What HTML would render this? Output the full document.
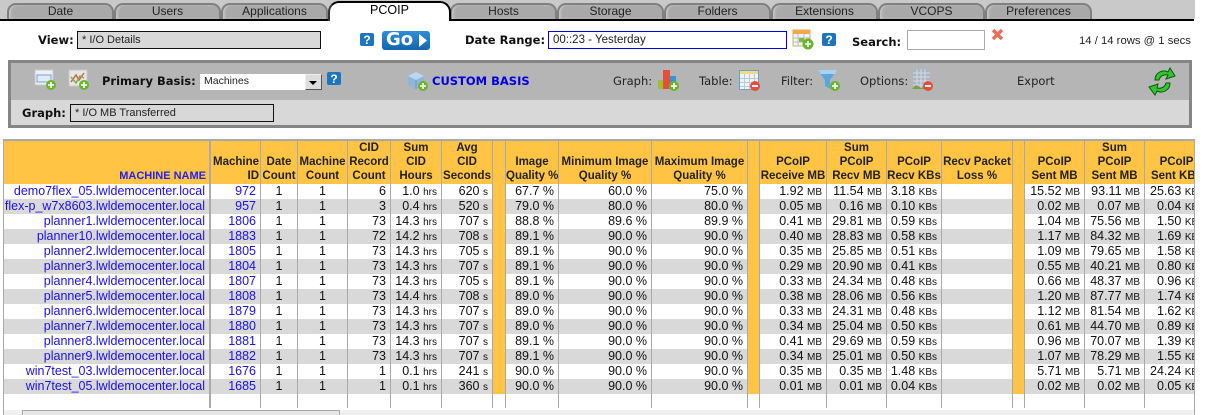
<!DOCTYPE html>
<html><head><meta charset="utf-8"><style>
html,body{margin:0;padding:0;width:1205px;height:415px;overflow:hidden;background:#fff;font-family:"Liberation Sans",Arial,sans-serif;color:#111}
.a{position:absolute}
.tab{position:absolute;top:3px;height:16px;width:107px;background:#a9a9a9;border:2px solid #808080;border-bottom:none;border-radius:9px 9px 0 0;box-sizing:border-box;text-align:center;font-size:12px;line-height:13px;color:#222;box-shadow:inset 2px 0 2px #c4c4c4}
.v{font:bold 11.5px "DejaVu Sans",sans-serif;color:#111;white-space:nowrap}
.l{font:11.5px "DejaVu Sans",sans-serif;color:#222;white-space:nowrap}
.box{position:absolute;box-sizing:border-box;background:#d8d8d8;border:1px solid #111;font-size:11px;line-height:16px;padding-left:4px;color:#222}
table{border-collapse:separate;border-spacing:0;table-layout:fixed;position:absolute;left:3px;top:139px;width:1192px;background:#fff}
th{background:#ffc444;font-size:11.5px;line-height:14px;font-weight:bold;color:#222;vertical-align:bottom;text-align:center;border-right:1px solid #aaa;border-top:2px solid #aaa;padding:0 0 1px;overflow:hidden;white-space:nowrap;height:42px}
td{height:15px;padding:0 4px 0 0;font-size:12.5px;line-height:15px;text-align:right;border-right:1px solid #aaa;white-space:nowrap;overflow:hidden;color:#111}
tr.g td{background:#d9d9d9}
td.n{color:#1a0ff0}
td.c{text-align:center;padding:0}
tr td.s,tr.g td.s,th.s{background:#ffc444}
td u{text-decoration:none;font-size:10px;line-height:10px}
tr.e td{height:14px;background:#fff}
</style></head><body>
<div class="a" style="left:0;top:0;width:1195px;height:19px;background:#c9c9c9"></div>
<div class="tab" style="left:7px">Date</div>
<div class="tab" style="left:114px">Users</div>
<div class="tab" style="left:221px">Applications</div>
<div class="tab" style="left:450px">Hosts</div>
<div class="tab" style="left:557px">Storage</div>
<div class="tab" style="left:664px">Folders</div>
<div class="tab" style="left:771px">Extensions</div>
<div class="tab" style="left:878px">VCOPS</div>
<div class="tab" style="left:985px">Preferences</div>
<div class="a" style="left:0;top:19px;width:1194px;height:2px;background:#000"></div>
<div class="a" style="left:328px;top:1px;width:123px;height:20px;box-sizing:border-box;background:#fff;border:2px solid #000;border-bottom:none;border-left-color:#333;border-radius:11px 11px 0 0;text-align:center;font-size:12.5px;line-height:15px;color:#000">PCOIP</div>

<div class="a v" style="left:38px;top:33px">View:</div>
<div class="box" style="left:77px;top:31px;width:244px;height:18px">* I/O Details</div>
<svg class="a" style="left:360px;top:33px" width="15" height="14"><rect width="14" height="13" rx="2" fill="#1f75bd"/><text x="7" y="11" text-anchor="middle" font-family="Liberation Sans" font-weight="bold" font-size="12" fill="#fff">?</text></svg>
<div class="a" style="left:382px;top:31px;width:48px;height:19px;border-radius:3px;background:linear-gradient(#2f8fd6,#1465ad)"></div>
<div class="a" style="left:386px;top:30px;font:bold 18px 'DejaVu Sans',sans-serif;line-height:20px;color:#fff">Go</div>
<svg class="a" style="left:418px;top:33px" width="10" height="15"><path d="M1 1 L9 7.5 L1 14 Z" fill="#fff"/></svg>
<div class="a v" style="left:465px;top:33px">Date Range:</div>
<div class="a" style="left:548px;top:31px;width:239px;height:18px;box-sizing:border-box;border:1px solid #0000e0;background:#fff;font-size:11.5px;line-height:16px;padding-left:4px;color:#222">00::23 - Yesterday</div>
<svg class="a" style="left:792px;top:29px" width="22" height="21"><rect x="1" y="1" width="17" height="16" fill="#eef3f5" stroke="#c9b070"/><rect x="1" y="1" width="17" height="4" fill="#f3a94a"/><path d="M6 5V17M12 5V17M1 9H18M1 13H18" stroke="#b5c4b5" fill="none"/><rect x="7" y="9" width="5" height="4" fill="#8ab34a"/><circle cx="16" cy="15" r="5.5" fill="#6bb52c"/><path d="M13 15H19M16 12V18" stroke="#fff" stroke-width="1.6"/></svg>
<svg class="a" style="left:822px;top:33px" width="15" height="14"><rect width="14" height="13" rx="2" fill="#1f75bd"/><text x="7" y="11" text-anchor="middle" font-family="Liberation Sans" font-weight="bold" font-size="12" fill="#fff">?</text></svg>
<div class="a v" style="left:852px;top:35px">Search:</div>
<div class="a" style="left:907px;top:30px;width:78px;height:20px;box-sizing:border-box;border:1px solid #aaa;background:#fff"></div>
<svg class="a" style="left:991px;top:28px" width="13" height="13"><path d="M2 2L11 11M11 2L2 11" stroke="#e8705f" stroke-width="3.4"/></svg>
<div class="a" style="left:1079px;top:34px;font-size:11.3px;line-height:14px;color:#222;white-space:nowrap">14 / 14 rows @ 1 secs</div>

<div class="a" style="left:8px;top:60px;width:1184px;height:68px;box-sizing:border-box;border:3px solid #858585;background:#d8d8d8">
<div style="height:37px;background:#b5b5b5"></div></div>
<svg class="a" style="left:34px;top:69px" width="23" height="22"><rect x="1" y="1" width="18" height="15" fill="#eef0f2" stroke="#c8c8c8"/><rect x="3" y="6" width="14" height="7" fill="#dfeaf6" stroke="#6fa6db"/><circle cx="17" cy="16" r="5" fill="#6bb52c"/><path d="M14 16H20M17 13V19" stroke="#fff" stroke-width="1.6"/></svg>
<svg class="a" style="left:68px;top:69px" width="23" height="22"><rect x="1" y="1" width="18" height="16" fill="#e6e6e6" stroke="#c8c8c8"/><path d="M3 13L8 6L11 11L16 4" stroke="#dc5a50" stroke-width="1.5" fill="none"/><path d="M3 8L8 14L12 7L16 9" stroke="#7fb04a" stroke-width="1.5" fill="none"/><circle cx="16" cy="16" r="5" fill="#6bb52c"/><path d="M13 16H19M16 13V19" stroke="#fff" stroke-width="1.6"/></svg>
<div class="a v" style="left:102px;top:74px">Primary Basis:</div>
<div class="a" style="left:200px;top:74px;width:122px;height:16px;box-sizing:border-box;background:#fff;font-size:10.5px;line-height:15px;padding-left:4px;color:#222">Machines</div>
<div class="a" style="left:305px;top:74px;width:17px;height:16px;box-sizing:border-box;background:#ddd;border:1px solid #555;border-top-color:#eee;border-left-color:#eee"></div>
<svg class="a" style="left:308px;top:81px" width="10" height="5"><path d="M1 0H9L5 4Z" fill="#000"/></svg>
<svg class="a" style="left:327px;top:72px" width="15" height="14"><rect width="14" height="13" rx="2" fill="#1f75bd"/><text x="7" y="11" text-anchor="middle" font-family="Liberation Sans" font-weight="bold" font-size="12" fill="#fff">?</text></svg>
<svg class="a" style="left:407px;top:70px" width="23" height="22"><path d="M1 6L9 2L17 6V15L9 19L1 15Z" fill="#8eb6de"/><path d="M1 6L9 10L17 6L9 2Z" fill="#bcd6ee"/><path d="M9 10V19" stroke="#6f9ac6"/><circle cx="16" cy="16" r="5" fill="#6bb52c"/><path d="M13 16H19M16 13V19" stroke="#fff" stroke-width="1.6"/></svg>
<div class="a" style="left:432px;top:74px;font:bold 11.5px 'DejaVu Sans',sans-serif;color:#0000e8;white-space:nowrap">CUSTOM BASIS</div>
<div class="a l" style="left:613px;top:74px">Graph:</div>
<svg class="a" style="left:658px;top:69px" width="22" height="22"><rect x="0" y="11" width="5" height="9" fill="#9cc02f"/><rect x="5" y="1" width="7" height="19" fill="#e2503c"/><rect x="12" y="7" width="6" height="13" fill="#3c92d6"/><circle cx="16" cy="17" r="5" fill="#6bb52c"/><path d="M13 17H19M16 14V20" stroke="#fff" stroke-width="1.6"/></svg>
<div class="a l" style="left:699px;top:74px">Table:</div>
<svg class="a" style="left:739px;top:69px" width="23" height="23"><rect x="0.5" y="1.5" width="19" height="19" fill="#eef3fa" stroke="#6aa0d0"/><rect x="1" y="2" width="18" height="3" fill="#f5d97a"/><path d="M5.5 5V20M10.5 5V20M15.5 5V20M1 9.5H19M1 13.5H19M1 17.5H19" stroke="#b9c9dc" fill="none"/><circle cx="16" cy="17" r="5" fill="#e2503c"/><path d="M13 17H19" stroke="#fff" stroke-width="1.8"/></svg>
<div class="a l" style="left:781px;top:74px">Filter:</div>
<svg class="a" style="left:818px;top:70px" width="23" height="23"><path d="M0 0H19L12 10V19L7 16V10Z" fill="#5aa6e0"/><path d="M0 0H19L17 4H3Z" fill="#a7d3f1"/><circle cx="17" cy="16" r="5" fill="#6bb52c"/><path d="M14 16H20M17 13V19" stroke="#fff" stroke-width="1.6"/></svg>
<div class="a l" style="left:860px;top:74px">Options:</div>
<svg class="a" style="left:912px;top:69px" width="23" height="23"><rect x="1" y="0" width="17" height="19" fill="#a9b4c4"/><path d="M5 0V19M9 0V19M13 0V19M1 4H18M1 8H18M1 12H18M1 16H18" stroke="#d6dbe3" fill="none"/><path d="M0 20L4 16L9 19L13 17V20Z" fill="#7ca03c"/><circle cx="16" cy="17" r="5" fill="#e2503c"/><path d="M13 17H19" stroke="#fff" stroke-width="1.8"/></svg>
<div class="a l" style="left:1017px;top:74px">Export</div>
<svg class="a" style="left:1148px;top:67px" width="29" height="30"><path d="M7 13C7 6 14 2 20 5L22 1L27 9L18 12L20 8C16 7 12 9 11 13Z" fill="#33c433" stroke="#0a5a0a"/><path d="M22 16C22 23 15 27 9 24L7 28L1 20L10 17L9 21C13 22 17 20 18 16Z" fill="#33c433" stroke="#0a5a0a"/></svg>
<div class="a v" style="left:22px;top:106px">Graph:</div>
<div class="box" style="left:70px;top:104px;width:204px;height:18px">* I/O MB Transferred</div>

<div class="a" style="left:3px;top:139px;width:1192px;height:270px;overflow:hidden">
<table style="left:0;top:0;width:1192px">
<colgroup><col style="width:208px"><col style="width:50px"><col style="width:37px"><col style="width:50px"><col style="width:43px"><col style="width:51px"><col style="width:51px"><col style="width:13px"><col style="width:53px"><col style="width:93px"><col style="width:96px"><col style="width:12px"><col style="width:67px"><col style="width:60px"><col style="width:55px"><col style="width:71px"><col style="width:12px"><col style="width:60px"><col style="width:60px"><col style="width:50px"></colgroup>
<tr><th style="text-align:right;color:#2222ee;padding-right:3px;border-right-width:2px;font-size:11px">MACHINE NAME</th><th style="text-align:right;padding-right:1px">Machine<br>ID</th><th>Date<br>Count</th><th>Machine<br>Count</th><th>CID<br>Record<br>Count</th><th>Sum<br>CID<br>Hours</th><th>Avg<br>CID<br>Seconds</th><th class="s"></th><th>Image<br>Quality %</th><th>Minimum Image<br>Quality %</th><th>Maximum Image<br>Quality %</th><th class="s"></th><th>PCoIP<br>Receive MB</th><th>Sum<br>PCoIP<br>Recv MB</th><th>PCoIP<br>Recv KBs</th><th>Recv Packet<br>Loss %</th><th class="s"></th><th>PCoIP<br>Sent MB</th><th>Sum<br>PCoIP<br>Sent MB</th><th><div style="width:63px">PCoIP<br>Sent KBs</div></th></tr>
<tr><td class="n" style="border-right-width:2px">demo7flex_05.lwldemocenter.local</td><td class="n">972</td><td class="c">1</td><td class="c">1</td><td>6</td><td>1.0 <u>hrs</u></td><td>620 <u>s</u></td><td class="s"></td><td>67.7 %</td><td>60.0 %</td><td>75.0 %</td><td class="s"></td><td>1.92 <u>MB</u></td><td>11.54 <u>MB</u></td><td>3.18 <u>KBs</u></td><td></td><td class="s"></td><td>15.52 <u>MB</u></td><td>93.11 <u>MB</u></td><td style="text-align:left;padding:0 0 0 5px">25.63 <u>KBs</u></td></tr>
<tr class="g"><td class="n" style="border-right-width:2px">flex-p_w7x8603.lwldemocenter.local</td><td class="n">957</td><td class="c">1</td><td class="c">1</td><td>3</td><td>0.4 <u>hrs</u></td><td>520 <u>s</u></td><td class="s"></td><td>79.0 %</td><td>80.0 %</td><td>80.0 %</td><td class="s"></td><td>0.05 <u>MB</u></td><td>0.16 <u>MB</u></td><td>0.10 <u>KBs</u></td><td></td><td class="s"></td><td>0.02 <u>MB</u></td><td>0.07 <u>MB</u></td><td style="text-align:left;padding:0 0 0 12px">0.04 <u>KBs</u></td></tr>
<tr><td class="n" style="border-right-width:2px">planner1.lwldemocenter.local</td><td class="n">1806</td><td class="c">1</td><td class="c">1</td><td>73</td><td>14.3 <u>hrs</u></td><td>707 <u>s</u></td><td class="s"></td><td>88.8 %</td><td>89.6 %</td><td>89.9 %</td><td class="s"></td><td>0.41 <u>MB</u></td><td>29.81 <u>MB</u></td><td>0.59 <u>KBs</u></td><td></td><td class="s"></td><td>1.04 <u>MB</u></td><td>75.56 <u>MB</u></td><td style="text-align:left;padding:0 0 0 12px">1.50 <u>KBs</u></td></tr>
<tr class="g"><td class="n" style="border-right-width:2px">planner10.lwldemocenter.local</td><td class="n">1883</td><td class="c">1</td><td class="c">1</td><td>72</td><td>14.2 <u>hrs</u></td><td>708 <u>s</u></td><td class="s"></td><td>89.1 %</td><td>90.0 %</td><td>90.0 %</td><td class="s"></td><td>0.40 <u>MB</u></td><td>28.83 <u>MB</u></td><td>0.58 <u>KBs</u></td><td></td><td class="s"></td><td>1.17 <u>MB</u></td><td>84.32 <u>MB</u></td><td style="text-align:left;padding:0 0 0 12px">1.69 <u>KBs</u></td></tr>
<tr><td class="n" style="border-right-width:2px">planner2.lwldemocenter.local</td><td class="n">1805</td><td class="c">1</td><td class="c">1</td><td>73</td><td>14.3 <u>hrs</u></td><td>705 <u>s</u></td><td class="s"></td><td>89.1 %</td><td>90.0 %</td><td>90.0 %</td><td class="s"></td><td>0.35 <u>MB</u></td><td>25.85 <u>MB</u></td><td>0.51 <u>KBs</u></td><td></td><td class="s"></td><td>1.09 <u>MB</u></td><td>79.65 <u>MB</u></td><td style="text-align:left;padding:0 0 0 12px">1.58 <u>KBs</u></td></tr>
<tr class="g"><td class="n" style="border-right-width:2px">planner3.lwldemocenter.local</td><td class="n">1804</td><td class="c">1</td><td class="c">1</td><td>73</td><td>14.3 <u>hrs</u></td><td>707 <u>s</u></td><td class="s"></td><td>89.1 %</td><td>90.0 %</td><td>90.0 %</td><td class="s"></td><td>0.29 <u>MB</u></td><td>20.90 <u>MB</u></td><td>0.41 <u>KBs</u></td><td></td><td class="s"></td><td>0.55 <u>MB</u></td><td>40.21 <u>MB</u></td><td style="text-align:left;padding:0 0 0 12px">0.80 <u>KBs</u></td></tr>
<tr><td class="n" style="border-right-width:2px">planner4.lwldemocenter.local</td><td class="n">1807</td><td class="c">1</td><td class="c">1</td><td>73</td><td>14.3 <u>hrs</u></td><td>705 <u>s</u></td><td class="s"></td><td>89.1 %</td><td>90.0 %</td><td>90.0 %</td><td class="s"></td><td>0.33 <u>MB</u></td><td>24.34 <u>MB</u></td><td>0.48 <u>KBs</u></td><td></td><td class="s"></td><td>0.66 <u>MB</u></td><td>48.37 <u>MB</u></td><td style="text-align:left;padding:0 0 0 12px">0.96 <u>KBs</u></td></tr>
<tr class="g"><td class="n" style="border-right-width:2px">planner5.lwldemocenter.local</td><td class="n">1808</td><td class="c">1</td><td class="c">1</td><td>73</td><td>14.4 <u>hrs</u></td><td>708 <u>s</u></td><td class="s"></td><td>89.0 %</td><td>90.0 %</td><td>90.0 %</td><td class="s"></td><td>0.38 <u>MB</u></td><td>28.06 <u>MB</u></td><td>0.56 <u>KBs</u></td><td></td><td class="s"></td><td>1.20 <u>MB</u></td><td>87.77 <u>MB</u></td><td style="text-align:left;padding:0 0 0 12px">1.74 <u>KBs</u></td></tr>
<tr><td class="n" style="border-right-width:2px">planner6.lwldemocenter.local</td><td class="n">1879</td><td class="c">1</td><td class="c">1</td><td>73</td><td>14.3 <u>hrs</u></td><td>707 <u>s</u></td><td class="s"></td><td>89.0 %</td><td>90.0 %</td><td>90.0 %</td><td class="s"></td><td>0.33 <u>MB</u></td><td>24.31 <u>MB</u></td><td>0.48 <u>KBs</u></td><td></td><td class="s"></td><td>1.12 <u>MB</u></td><td>81.54 <u>MB</u></td><td style="text-align:left;padding:0 0 0 12px">1.62 <u>KBs</u></td></tr>
<tr class="g"><td class="n" style="border-right-width:2px">planner7.lwldemocenter.local</td><td class="n">1880</td><td class="c">1</td><td class="c">1</td><td>73</td><td>14.3 <u>hrs</u></td><td>707 <u>s</u></td><td class="s"></td><td>89.0 %</td><td>90.0 %</td><td>90.0 %</td><td class="s"></td><td>0.34 <u>MB</u></td><td>25.04 <u>MB</u></td><td>0.50 <u>KBs</u></td><td></td><td class="s"></td><td>0.61 <u>MB</u></td><td>44.70 <u>MB</u></td><td style="text-align:left;padding:0 0 0 12px">0.89 <u>KBs</u></td></tr>
<tr><td class="n" style="border-right-width:2px">planner8.lwldemocenter.local</td><td class="n">1881</td><td class="c">1</td><td class="c">1</td><td>73</td><td>14.3 <u>hrs</u></td><td>707 <u>s</u></td><td class="s"></td><td>89.1 %</td><td>90.0 %</td><td>90.0 %</td><td class="s"></td><td>0.41 <u>MB</u></td><td>29.69 <u>MB</u></td><td>0.59 <u>KBs</u></td><td></td><td class="s"></td><td>0.96 <u>MB</u></td><td>70.07 <u>MB</u></td><td style="text-align:left;padding:0 0 0 12px">1.39 <u>KBs</u></td></tr>
<tr class="g"><td class="n" style="border-right-width:2px">planner9.lwldemocenter.local</td><td class="n">1882</td><td class="c">1</td><td class="c">1</td><td>73</td><td>14.3 <u>hrs</u></td><td>707 <u>s</u></td><td class="s"></td><td>89.1 %</td><td>90.0 %</td><td>90.0 %</td><td class="s"></td><td>0.34 <u>MB</u></td><td>25.01 <u>MB</u></td><td>0.50 <u>KBs</u></td><td></td><td class="s"></td><td>1.07 <u>MB</u></td><td>78.29 <u>MB</u></td><td style="text-align:left;padding:0 0 0 12px">1.55 <u>KBs</u></td></tr>
<tr><td class="n" style="border-right-width:2px">win7test_03.lwldemocenter.local</td><td class="n">1676</td><td class="c">1</td><td class="c">1</td><td>1</td><td>0.1 <u>hrs</u></td><td>241 <u>s</u></td><td class="s"></td><td>90.0 %</td><td>90.0 %</td><td>90.0 %</td><td class="s"></td><td>0.35 <u>MB</u></td><td>0.35 <u>MB</u></td><td>1.48 <u>KBs</u></td><td></td><td class="s"></td><td>5.71 <u>MB</u></td><td>5.71 <u>MB</u></td><td style="text-align:left;padding:0 0 0 5px">24.24 <u>KBs</u></td></tr>
<tr class="g"><td class="n" style="border-right-width:2px">win7test_05.lwldemocenter.local</td><td class="n">1685</td><td class="c">1</td><td class="c">1</td><td>1</td><td>0.1 <u>hrs</u></td><td>360 <u>s</u></td><td class="s"></td><td>90.0 %</td><td>90.0 %</td><td>90.0 %</td><td class="s"></td><td>0.01 <u>MB</u></td><td>0.01 <u>MB</u></td><td>0.04 <u>KBs</u></td><td></td><td class="s"></td><td>0.02 <u>MB</u></td><td>0.02 <u>MB</u></td><td style="text-align:left;padding:0 0 0 12px">0.05 <u>KBs</u></td></tr>
<tr class="e"><td style="border-right-width:2px"></td><td></td><td></td><td></td><td></td><td></td><td></td><td></td><td></td><td></td><td></td><td></td><td></td><td></td><td></td><td></td><td></td><td></td><td></td><td></td></tr>
</table></div>
<div class="a" style="left:3px;top:139px;width:1px;height:276px;background:#aaa"></div>
<div class="a" style="left:1194px;top:139px;width:1px;height:276px;background:#aaa"></div>
<div class="a" style="left:4px;top:410px;width:1190px;height:5px;background:#f0f0f0"></div>
<div class="a" style="left:22px;top:410px;width:318px;height:5px;box-sizing:border-box;background:#e6e6e6;border:1px solid #aaa;border-bottom:none"></div>
</body></html>
